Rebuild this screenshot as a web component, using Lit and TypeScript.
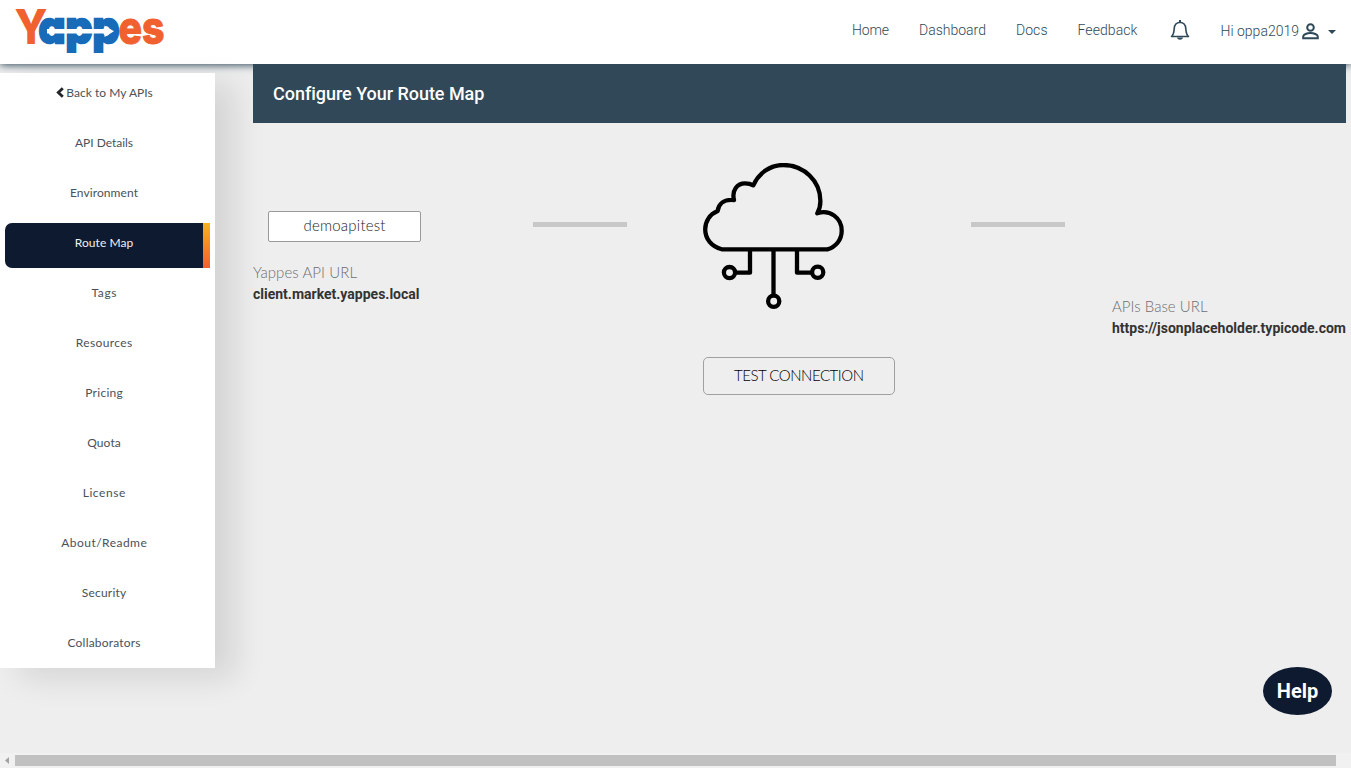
import { LitElement, html, css, svg } from "lit";
import { customElement, property } from "lit/decorators.js";

/* Text tracked out or in so that it takes exactly the given width. */
@customElement("fit-text")
class FitText extends LitElement {
  @property() text = "";
  @property({ type: Number }) width = 0;

  static styles = css`
    :host { display: inline-block; white-space: nowrap; }
    .run { display: inline-block; }
  `;

  render() {
    return html`<span class="run">${this.text}</span>`;
  }

  updated() {
    const run = this.renderRoot.querySelector<HTMLElement>(".run")!;
    run.style.letterSpacing = "0px";
    const natural = run.getBoundingClientRect().width;
    const step = (this.width - natural) / (this.text.length - 1);
    run.style.letterSpacing = `${step}px`;
    run.style.marginRight = `${-step}px`;
  }
}

@customElement("top-bar")
class TopBar extends LitElement {
  static styles = css`
    :host {
      display: flex; flex: none; height: 64px; box-sizing: border-box; padding: 0 15px;
      background: #fff; box-shadow: 0 1px 8px #2f4858; color: #2f4858;
      font: 300 14px/20px Roboto, sans-serif;
    }
    .logo { width: 152px; height: 60px; flex: none; overflow: visible; }
    .mark { font-family: Inter, sans-serif; font-weight: 800; font-size: 48px; font-feature-settings: "cv11"; }
    .orange { fill: #f1602f; }
    .round { stroke: #f1602f; stroke-width: 1px; font-size: 46.5px; }
    .blue { fill: #176bb8; stroke: #176bb8; stroke-width: 2.4px; font-size: 44.5px; }
    nav { margin-left: auto; display: flex; gap: 30px; padding-top: 20px; }
    .bell { width: 20px; height: 22px; margin: 0 0 0 3px; }
    .user { display: flex; padding-top: 1px; }
    .person { width: 17px; height: 17px; margin: 2px 9px 0 3px; }
    .caret { width: 8px; height: 4px; margin-top: 9px; }
  `;

  render() {
    return html`
      <svg class="logo" viewBox="0 0 152 60">
        <g class="mark">
          <text class="orange" x="-0.500" y="44" textLength="33" lengthAdjust="spacingAndGlyphs">Y</text>
          <text class="blue" x="23.500" y="43.300" textLength="81" lengthAdjust="spacingAndGlyphs">app</text>
          <text class="orange round" x="103.500" y="43.600" textLength="46" lengthAdjust="spacingAndGlyphs">es</text>
        </g>
        <path fill="#fff" d="M32 29h57.500v-3.500l9.500 5.700-9.500 5.700v-3.300H32z" />
      </svg>
      <nav>
        <fit-text text="Home" width="37"></fit-text>
        <fit-text text="Dashboard" width="67"></fit-text>
        <fit-text text="Docs" width="31.500"></fit-text>
        <fit-text text="Feedback" width="60"></fit-text>
        <svg class="bell" viewBox="0 0 20 22">
          <path fill="none" stroke="#2f4858" stroke-width="1.600" stroke-linejoin="round"
            d="M1.500 16.500C4 14.500 4 12 4.200 8.500 4.500 4.500 6.500 2.500 10 2.200c3.500.3 5.500 2.300 5.800 6.300.2 3.500.2 6 2.700 8z" />
          <path fill="#2f4858" d="M9 0h2v2H9zM7 17.500h6c-.5 3-5.500 3-6 0z" />
        </svg>
        <div class="user">
          <fit-text text="Hi oppa2019" width="78.500"></fit-text>
          <svg class="person" viewBox="0 0 17 17">
            <g fill="none" stroke="#2f4858" stroke-width="2">
              <circle cx="8.500" cy="4.500" r="3.300" />
              <path d="M1.200 15.200v-1.700c0-2 4-3.500 7.300-3.500s7.300 1.500 7.300 3.500v1.700z" />
            </g>
          </svg>
          <svg class="caret" viewBox="0 0 8 4"><path fill="#2f4858" d="M0 0h8L4 4z" /></svg>
        </div>
      </nav>
    `;
  }
}

const MENU: [string, number][] = [
  ["Back to My APIs", 86.5], ["API Details", 58], ["Environment", 68], ["Route Map", 58.5],
  ["Tags", 25], ["Resources", 56.5], ["Pricing", 37.5], ["Quota", 33.5], ["License", 42.5],
  ["About/Readme", 85.5], ["Security", 44.5], ["Collaborators", 73],
];

@customElement("side-menu")
class SideMenu extends LitElement {
  static styles = css`
    :host {
      display: flex; flex-direction: column; gap: 5px; flex: none; width: 215px;
      box-sizing: border-box; padding: 0 5px; background: #fff; color: #4a5158;
      box-shadow: 20px 10px 30px rgba(0, 0, 0, 0.11);
      font: 400 12px/20px Lato, sans-serif;
    }
    .item { display: flex; height: 45px; border-radius: 7px 0 0 7px; overflow: hidden; }
    .label { flex: 1; display: flex; justify-content: center; padding-top: 10px; }
    .edge { width: 7px; }
    .active { background: #0e1a30; color: #f0f0f0; }
    .active .edge { background: linear-gradient(#fab01f, #f1602f); }
    .chevron { width: 9px; height: 11px; margin: 4px 2px 0 0; }
  `;

  render() {
    return MENU.map(([text, width], i) => html`
      <div class="item ${text === "Route Map" ? "active" : ""}">
        <div class="label">
          ${i === 0 ? html`<svg class="chevron" viewBox="0 0 9 11">
            <path fill="none" stroke="#212529" stroke-width="2.800" d="M7.800 1.200L3.300 5.500l4.500 4.300" />
          </svg>` : ""}
          <fit-text .text=${text} .width=${width}></fit-text>
        </div>
        <div class="edge"></div>
      </div>
    `);
  }
}

const cloud = svg`
  <g fill="none" stroke="#000" stroke-width="4.300" stroke-linejoin="round">
    <path d="M18.700 86.300C8.500 83.500 2.200 76 2.200 66.300C2.200 58.500 6.800 51 14.700 48
      C15.500 41 21 36 31 37C28.500 27 34.500 20.300 42 20.300C45.500 20.300 48 20.900 50.300 22.300
      C56 10 67 2 80.300 2C101 2 117.400 18 117.400 38C117.400 43 116.500 46.500 114.300 50.300
      C127 46 138.700 55 138.700 67.700C138.700 76.500 133 84 124.300 86.300Z" />
    <path d="M47 87v22.700H33.500M70.500 87v45M94 87v22.700h14" />
    <circle cx="26.500" cy="109.600" r="5.600" />
    <circle cx="70.700" cy="138.300" r="5.600" />
    <circle cx="114.700" cy="109.300" r="5.600" />
  </g>
`;

@customElement("route-map")
class RouteMap extends LitElement {
  static styles = css`
    :host { display: block; flex: 1; margin-right: 5px; }
    .banner {
      height: 59px; box-sizing: border-box; padding-left: 20px; background: #304857; color: #fff;
      font: 500 18px/59px Roboto, sans-serif;
    }
    .map { display: grid; grid-template-columns: 280px 170px 268px 141px 234px; align-items: start; }
    .client { padding-top: 88px; }
    .name {
      width: 153px; height: 31px; box-sizing: border-box; margin: 0 0 21px 15px; text-align: center;
      border: 1px solid #9a9a9a; border-radius: 2px; background: #fff; color: #1c1c1c;
      font: 300 15px/27px Lato, sans-serif;
    }
    .caption { margin-bottom: 2px; color: #6e6e6e; font: 300 15px/19px Lato, sans-serif; }
    .url { color: #333; font: 700 14px/21px Roboto, sans-serif; }
    .link { width: 94px; height: 5px; margin-top: 99px; background: #c8c8c8; }
    .hub { padding-top: 40px; }
    .cloud { display: block; width: 141px; height: 147px; }
    .test {
      display: block; width: 192px; height: 38px; margin-top: 47px; padding: 0 0 2px; border: 1px solid #a0a0a0;
      border-radius: 5px; background: transparent; color: #000; font: 300 15px/34px Lato, sans-serif;
    }
    .target { padding-top: 174px; }
  `;

  render() {
    return html`
      <div class="banner"><fit-text text="Configure Your Route Map" width="211"></fit-text></div>
      <div class="map">
        <div class="client">
          <div class="name"><fit-text text="demoapitest" width="82"></fit-text></div>
          <div class="caption"><fit-text text="Yappes API URL" width="104"></fit-text></div>
          <div class="url"><fit-text text="client.market.yappes.local" width="166.500"></fit-text></div>
        </div>
        <div class="link"></div>
        <div class="hub">
          <svg class="cloud" viewBox="0 0 141 147">${cloud}</svg>
          <button class="test"><fit-text text="TEST CONNECTION" width="130"></fit-text></button>
        </div>
        <div class="link"></div>
        <div class="target">
          <div class="caption"><fit-text text="APIs Base URL" width="95.500"></fit-text></div>
          <div class="url"><fit-text text="https://jsonplaceholder.typicode.com" width="234"></fit-text></div>
        </div>
      </div>
    `;
  }
}

@customElement("app-root")
class AppRoot extends LitElement {
  static styles = css`
    :host {
      display: flex; flex-direction: column; position: relative; width: 1351px; height: 768px;
      overflow: hidden; background: #eee;
    }
    .body { display: flex; flex: 1; gap: 38px; align-items: flex-start; }
    .menu { margin-top: 9px; }
    .content { position: relative; }
    .help {
      position: absolute; right: 19px; bottom: 53px; width: 69px; height: 48px; border-radius: 50%;
      background: #0e1a30; color: #fff; text-align: center; font: 700 20px/48px Roboto, sans-serif;
    }
    .scroll { display: flex; align-items: center; flex: none; height: 15px; background: #f1f1f1; }
    .arrow { width: 15px; height: 15px; }
    .thumb { flex: 1; height: 11px; margin-right: 15px; background: #c1c1c1; }
  `;

  render() {
    return html`
      <top-bar></top-bar>
      <div class="body">
        <side-menu class="menu"></side-menu>
        <route-map class="content"></route-map>
      </div>
      <div class="scroll">
        <svg class="arrow" viewBox="0 0 15 15"><path fill="#a3a3a3" d="M9 4v7L5 7.500z" /></svg>
        <div class="thumb"></div>
      </div>
      <div class="help">Help</div>
    `;
  }
}
